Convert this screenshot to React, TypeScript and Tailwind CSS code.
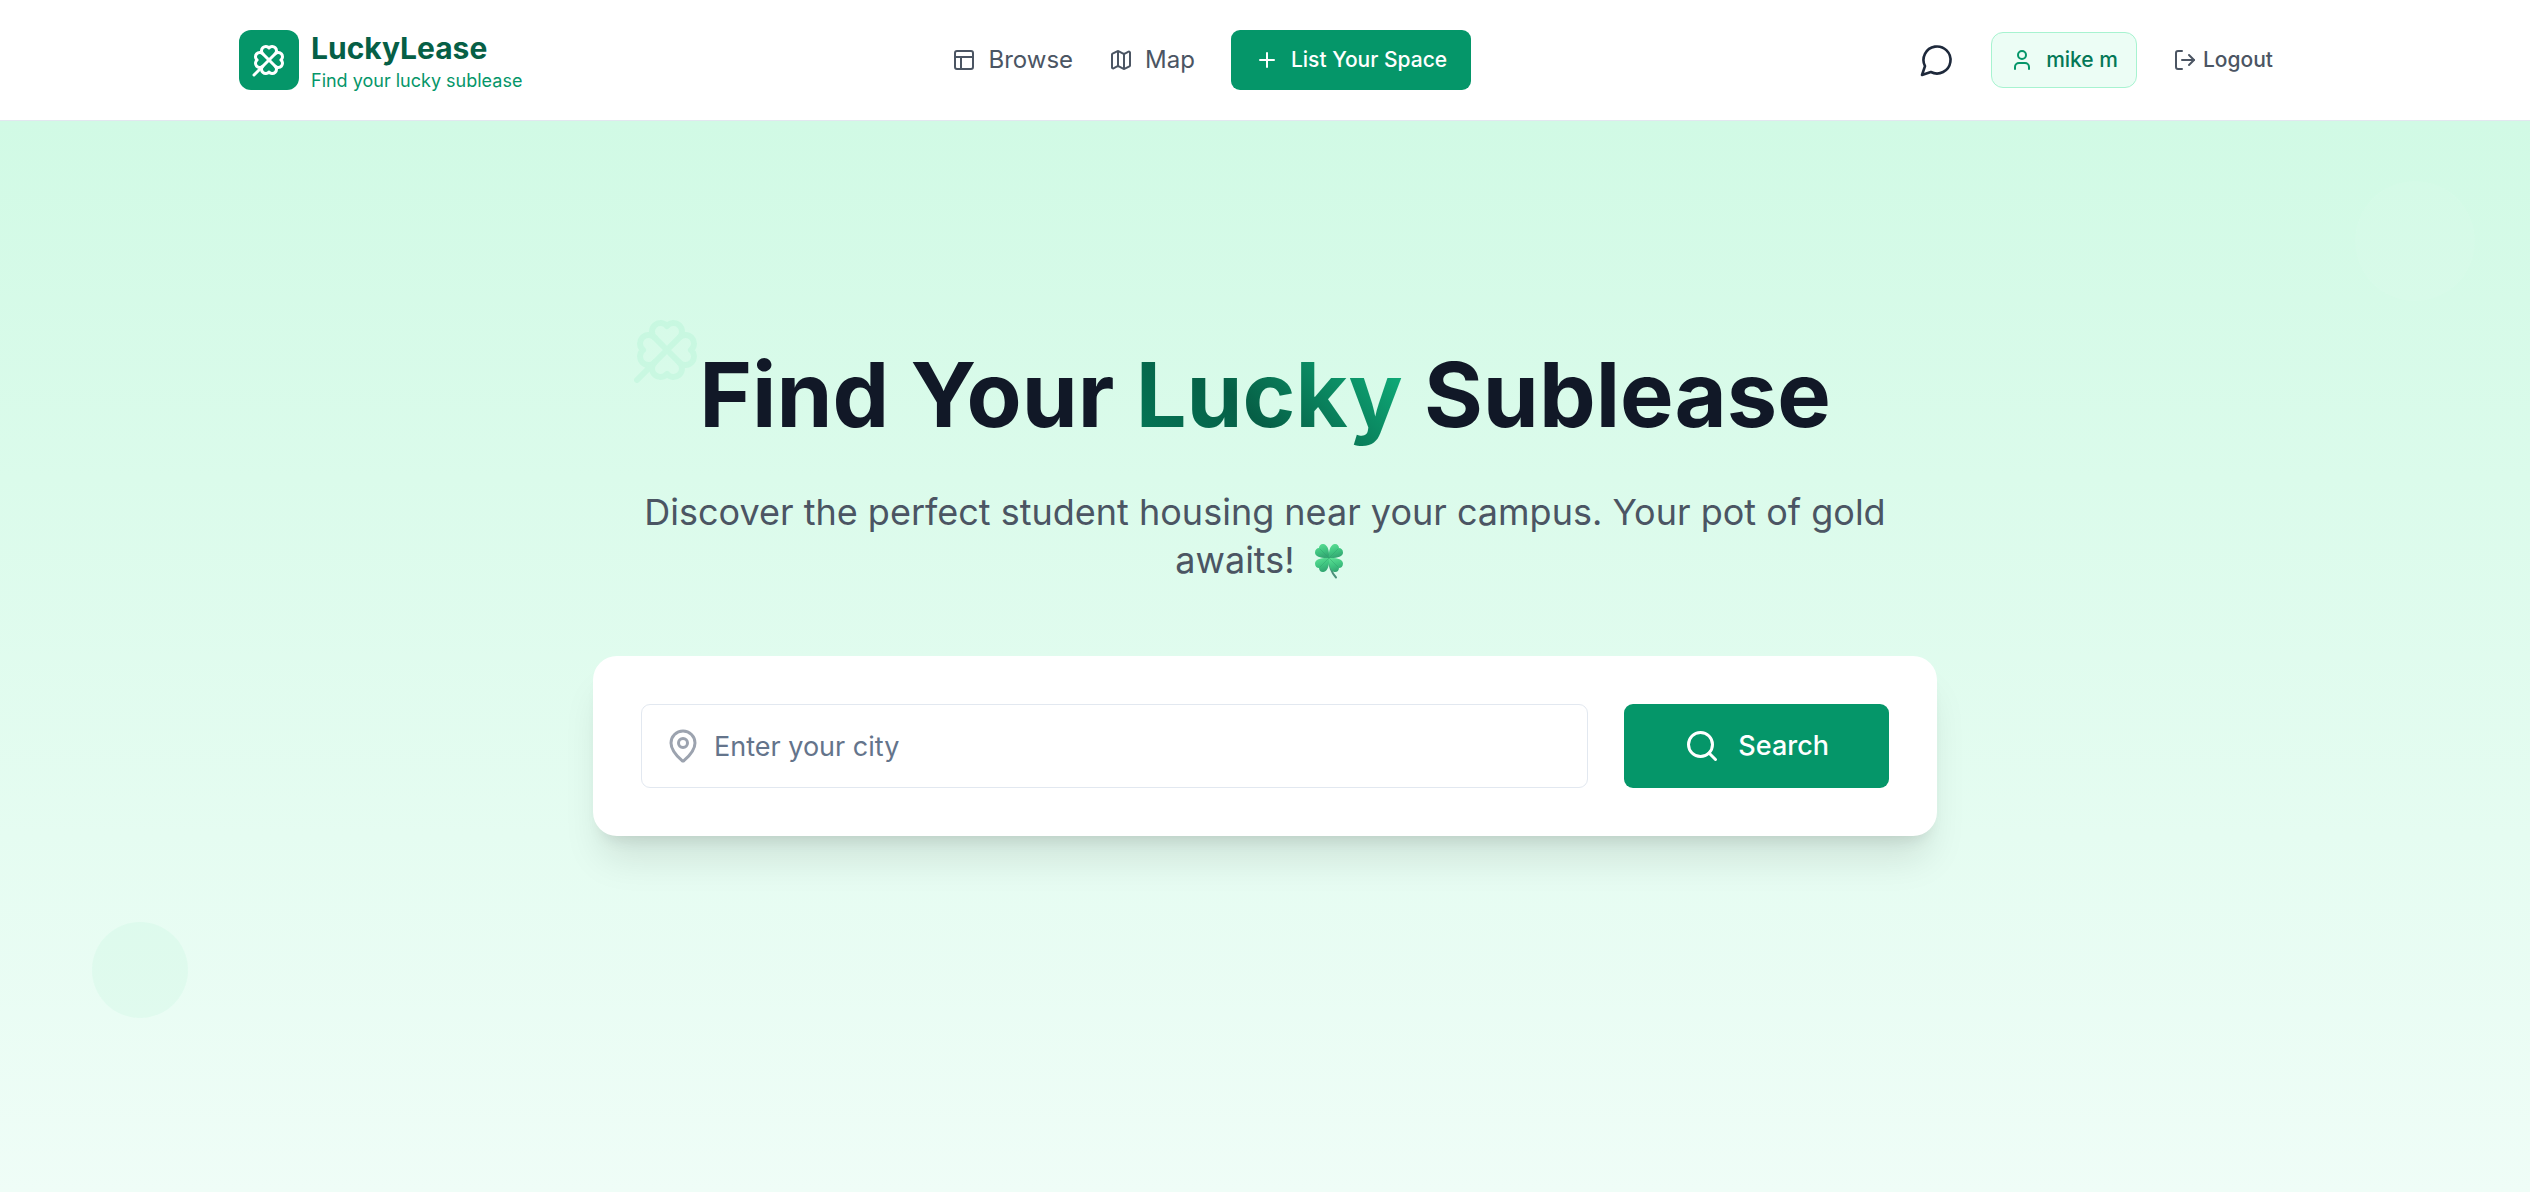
import { useState } from 'react';
import { LogOut, Map, MapPin, PanelsTopLeft, Plus, Search, User } from 'lucide-react';

const navLinks = [
  { name: 'Browse', icon: PanelsTopLeft },
  { name: 'Map', icon: Map },
];

const CloverIcon = ({ className }: { className?: string }) => (
  <svg
    viewBox="0 0 24 24"
    fill="none"
    stroke="currentColor"
    strokeWidth="2"
    strokeLinecap="round"
    strokeLinejoin="round"
    className={className}
    aria-hidden="true"
  >
    <path d="M16.17 7.83 2 22" />
    <path d="M4.02 12a2.827 2.827 0 1 1 3.81-4.17A2.827 2.827 0 1 1 12 4.02a2.827 2.827 0 1 1 4.17 3.81A2.827 2.827 0 1 1 19.98 12a2.827 2.827 0 1 1-3.81 4.17A2.827 2.827 0 1 1 12 19.98a2.827 2.827 0 1 1-4.17-3.81A2.827 2.827 0 1 1 4.02 12" />
    <path d="m7.83 7.83 8.34 8.34" />
  </svg>
);

const ChatIcon = ({ className }: { className?: string }) => (
  <svg
    viewBox="0 0 24 24"
    fill="none"
    stroke="currentColor"
    strokeWidth="1.75"
    strokeLinecap="round"
    strokeLinejoin="round"
    className={className}
    aria-hidden="true"
  >
    <path d="M7.9 20A9 9 0 1 0 4 16.1L2 22Z" />
  </svg>
);

const FourLeafClover = () => (
  <svg viewBox="0 3 50 42" className="inline-block w-[50px] h-[42px] align-middle" role="img" aria-label="four leaf clover">
    <defs>
      <linearGradient id="leaf" x1="0" y1="0" x2="0.3" y2="1">
        <stop offset="0" stopColor="#5ee296" />
        <stop offset="0.6" stopColor="#3fc480" />
        <stop offset="1" stopColor="#34a873" />
      </linearGradient>
    </defs>
    <path d="M24 19C24 27 26 33 31 38.500" fill="none" stroke="#4c8f7a" strokeWidth="2" strokeLinecap="round" />
    <g fill="url(#leaf)">
      <path d="M24 19C17 19.500 10 18 10 13.500C10 10.500 12 9 14 9C14 6.500 16 4.500 18.500 5C23 6 24.500 12 24 19Z" />
      <path d="M24 19C23.500 12 25 6 29.500 5C32 4.500 34 6.500 34 9C36 9 38 10.500 38 13.500C38 18 31 19.500 24 19Z" />
      <path d="M24 19C31 18.500 38 20 38 24.500C38 27.500 36 29 34 29C34 31.500 32 33.500 29.500 33C25 32 23.500 26 24 19Z" />
      <path d="M24 19C24.500 26 23 32 18.500 33C16 33.500 14 31.500 14 29C12 29 10 27.500 10 24.500C10 20 17 18.500 24 19Z" />
    </g>
    <g fill="none" stroke="#2f9c6a" strokeWidth="0.8" opacity="0.5">
      <path d="M15 10L33 28" />
      <path d="M33 10L15 28" />
    </g>
  </svg>
);

const Header = () => (
  <header className="bg-white border-b border-[#e2e8f0]">
    <div className="mx-auto flex h-[120px] max-w-[2100px] items-center justify-between px-6">
      <a href="#" className="flex items-center gap-3">
        <span className="flex size-[60px] items-center justify-center rounded-xl bg-[#059669]">
          <CloverIcon className="size-9 text-white" />
        </span>
        <span className="flex flex-col">
          <span className="text-[30px] leading-[42px] font-bold text-[#065f46]">LuckyLease</span>
          <span className="text-lg leading-6 text-[#059669]">Find your lucky sublease</span>
        </span>
      </a>

      <nav className="flex items-center gap-9">
        {navLinks.map((link) => {
          const Icon = link.icon;
          return (
            <a key={link.name} href="#" className="flex items-center gap-3 text-2xl leading-9 text-[#4b5563]">
              <Icon className="size-6" />
              {link.name}
            </a>
          );
        })}
        <button className="flex h-[60px] items-center gap-3 rounded-[9px] bg-[#059669] px-6 text-[21px] leading-[30px] font-medium text-white">
          <Plus className="size-6" />
          List Your Space
        </button>
      </nav>

      <div className="flex items-center gap-[18px]">
        <button aria-label="Messages" className="flex h-[60px] items-center px-[18px] text-[#1e293b]">
          <ChatIcon className="size-9" />
        </button>
        <a
          href="#"
          className="flex items-center gap-3 rounded-xl border border-[#a7f3d0] bg-[#ecfdf5] px-[18px] py-3 text-[21px] leading-[30px] font-medium text-[#047857]"
        >
          <User className="size-6 text-[#059669]" />
          mike m
        </a>
        <button className="flex h-[54px] items-center gap-1.5 px-[18px] text-[21px] leading-[30px] font-medium text-[#4b5563]">
          <LogOut className="size-6" />
          Logout
        </button>
      </div>
    </div>
  </header>
);

const Hero = () => {
  const [city, setCity] = useState('');

  return (
    <main className="relative flex-1 overflow-hidden bg-linear-to-b/srgb from-[#d1fae5] to-[#effdf7] px-6 pt-[229px] pb-[240px]">
      {/* Background shapes */}
      <div className="absolute top-[60px] right-[55px] size-[120px] rounded-full bg-[#ecfdf5]/10" />
      <div className="absolute top-[801px] left-[92px] size-24 rounded-full bg-[#a7f3d0]/15" />

      <div className="relative mx-auto max-w-[1344px] text-center">
        <CloverIcon className="absolute -top-9 left-[38px] size-[72px] text-[#a7f3d0] opacity-30" />
        <h1 className="relative text-[90px] leading-[90px] font-bold text-[#111827]">
          Find Your{' '}
          <span className="bg-linear-45/srgb from-[#047857] via-[#065f46] via-40% to-[#10b981] bg-clip-text text-transparent">
            Lucky
          </span>{' '}
          Sublease
        </h1>
        <p className="mt-12 text-4xl leading-12 text-[#4b5563]">
          Discover the perfect student housing near your campus. Your pot of gold awaits! <FourLeafClover />
        </p>

        <form
          onSubmit={(e) => e.preventDefault()}
          className="mt-[72px] flex gap-9 rounded-3xl bg-white p-12 shadow-[0_30px_38px_-8px_rgb(0_0_0/0.1),0_12px_15px_-9px_rgb(0_0_0/0.1)]"
        >
          <div className="relative flex-1">
            <MapPin className="absolute top-6 left-6 size-9 text-[#9ca3af]" />
            <input
              type="text"
              aria-label="City"
              placeholder="Enter your city"
              value={city}
              onChange={(e) => setCity(e.target.value)}
              className="h-[84px] w-full rounded-[9px] border border-[#e2e8f0] bg-white pr-6 pl-[72px] text-[27px] text-[#111827] placeholder:text-[#64748b]"
            />
          </div>
          <button className="flex h-[84px] items-center gap-[18px] rounded-[9px] bg-[#059669] px-[60px] text-[27px] font-medium text-white">
            <Search className="size-9" />
            Search
          </button>
        </form>
      </div>
    </main>
  );
};

const App = () => {
  return (
    <div className="flex min-h-screen flex-col font-[Inter,sans-serif]">
      <Header />
      <Hero />
    </div>
  );
};

export default App;
